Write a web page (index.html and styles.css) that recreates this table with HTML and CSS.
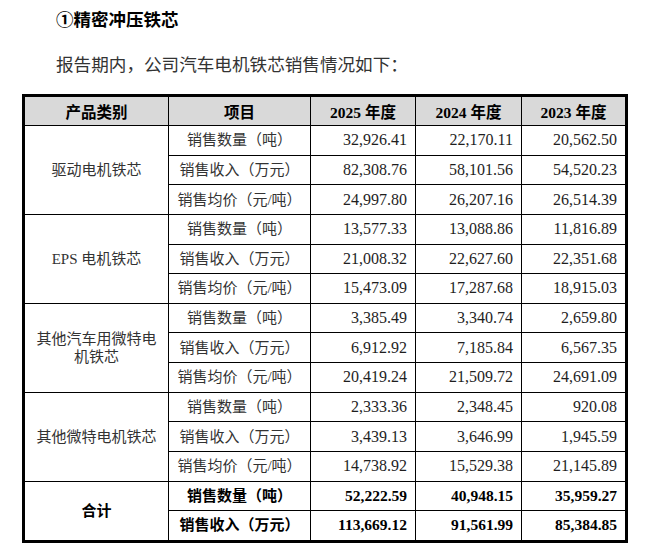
FILE: index.html
```html
<!DOCTYPE html>
<html lang="zh-CN">
<head>
<meta charset="utf-8">
<title>精密冲压铁芯</title>
<link rel="stylesheet" href="styles.css">
</head>
<body>
<div class="page">
  <h1 class="title">①精密冲压铁芯</h1>
  <p class="intro">报告期内，公司汽车电机铁芯销售情况如下：</p>
  <table class="sales">
    <colgroup>
      <col class="c1"><col class="c2"><col class="c3"><col class="c4"><col class="c5">
    </colgroup>
    <thead>
      <tr><th>产品类别</th><th>项目</th><th>2025 年度</th><th>2024 年度</th><th>2023 年度</th></tr>
    </thead>
    <tbody>
      <tr><td rowspan="3" class="cat">驱动电机铁芯</td><td class="item">销售数量（吨）</td><td class="num">32,926.41</td><td class="num">22,170.11</td><td class="num">20,562.50</td></tr>
      <tr><td class="item">销售收入（万元）</td><td class="num">82,308.76</td><td class="num">58,101.56</td><td class="num">54,520.23</td></tr>
      <tr><td class="item">销售均价（元/吨）</td><td class="num">24,997.80</td><td class="num">26,207.16</td><td class="num">26,514.39</td></tr>

      <tr><td rowspan="3" class="cat">EPS 电机铁芯</td><td class="item">销售数量（吨）</td><td class="num">13,577.33</td><td class="num">13,088.86</td><td class="num">11,816.89</td></tr>
      <tr><td class="item">销售收入（万元）</td><td class="num">21,008.32</td><td class="num">22,627.60</td><td class="num">22,351.68</td></tr>
      <tr><td class="item">销售均价（元/吨）</td><td class="num">15,473.09</td><td class="num">17,287.68</td><td class="num">18,915.03</td></tr>

      <tr><td rowspan="3" class="cat">其他汽车用微特电机铁芯</td><td class="item">销售数量（吨）</td><td class="num">3,385.49</td><td class="num">3,340.74</td><td class="num">2,659.80</td></tr>
      <tr><td class="item">销售收入（万元）</td><td class="num">6,912.92</td><td class="num">7,185.84</td><td class="num">6,567.35</td></tr>
      <tr><td class="item">销售均价（元/吨）</td><td class="num">20,419.24</td><td class="num">21,509.72</td><td class="num">24,691.09</td></tr>

      <tr><td rowspan="3" class="cat">其他微特电机铁芯</td><td class="item">销售数量（吨）</td><td class="num">2,333.36</td><td class="num">2,348.45</td><td class="num">920.08</td></tr>
      <tr><td class="item">销售收入（万元）</td><td class="num">3,439.13</td><td class="num">3,646.99</td><td class="num">1,945.59</td></tr>
      <tr><td class="item">销售均价（元/吨）</td><td class="num">14,738.92</td><td class="num">15,529.38</td><td class="num">21,145.89</td></tr>

      <tr class="total"><td rowspan="2" class="cat end">合计</td><td class="item">销售数量（吨）</td><td class="num">52,222.59</td><td class="num">40,948.15</td><td class="num">35,959.27</td></tr>
      <tr class="total"><td class="item">销售收入（万元）</td><td class="num">113,669.12</td><td class="num">91,561.99</td><td class="num">85,384.85</td></tr>
    </tbody>
  </table>
</div>
</body>
</html>
```
FILE: styles.css
```css
html, body {
  margin: 0;
  padding: 0;
  background: #fff;
}

.page {
  padding: 8px 0 0 22px;
  font-family: "Liberation Serif", "Noto Sans CJK SC", serif;
  color: #222;
}

.title {
  margin: 0 0 0 34px;
  font-family: "Liberation Sans", "Noto Sans CJK SC", sans-serif;
  font-size: 17.5px;
  font-weight: bold;
  line-height: 24px;
  color: #000;
}

.intro {
  margin: 20px 0 0 34px;
  font-family: "Noto Sans CJK SC", sans-serif;
  font-size: 17.6px;
  line-height: 24px;
  color: #333;
}

.sales {
  margin-top: 18px;
  width: 606px;
  table-layout: fixed;
  border-collapse: separate;
  border-spacing: 0;
  border: 3px solid #000;
}

.c1 { width: 144px; }
.c2 { width: 142px; }
.c3 { width: 105px; }
.c4 { width: 106px; }
.c5 { width: 103px; }

.sales th,
.sales td {
  border-right: 1px solid #000;
  border-bottom: 1px solid #000;
  padding: 0 8px;
  vertical-align: middle;
}

.sales th:last-child,
.sales td:last-child {
  border-right: 0;
}

.sales tbody tr:last-child td,
.sales td.end {
  border-bottom: 0;
}

.sales th {
  height: 28px;
  background: #d9d9d9;
  font-family: "Liberation Serif", "Noto Sans CJK SC", sans-serif;
  font-weight: bold;
  font-size: 15.5px;
  color: #000;
  text-align: center;
}

.sales td {
  height: 28.64px;
}

.cat,
.item {
  font-family: "Liberation Serif", "Noto Sans CJK SC", sans-serif;
  font-size: 15px;
  line-height: 18px;
  color: #333;
  text-align: center;
}

.cat {
  padding: 0 10px;
}

.num {
  font-family: "Liberation Serif", serif;
  font-size: 16px;
  color: #1e1e1e;
  text-align: right;
}

.total td {
  font-weight: bold;
  color: #000;
}

.total .num {
  font-size: 15.5px;
}
```
